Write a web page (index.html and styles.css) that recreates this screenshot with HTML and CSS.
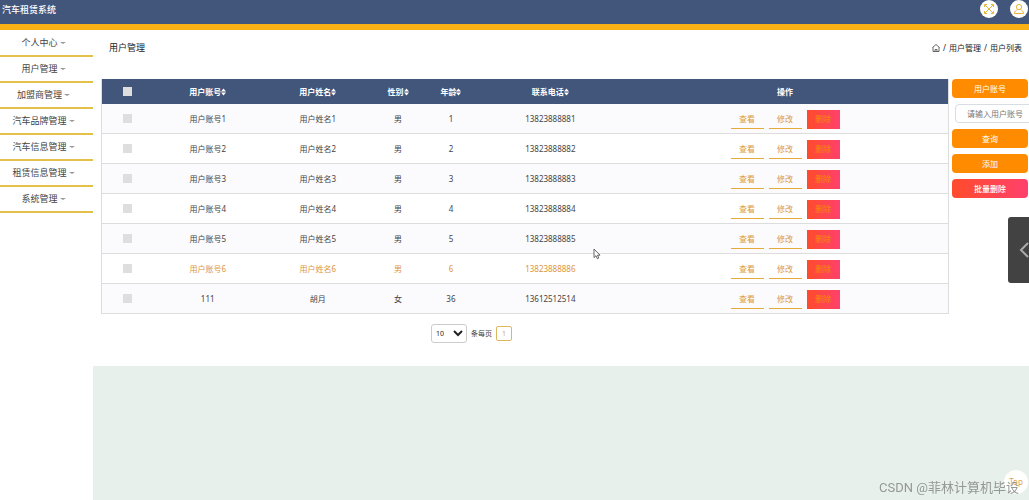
FILE: index.html
```
<!DOCTYPE html>
<html lang="zh-CN">
<head>
<meta charset="utf-8">
<title>汽车租赁系统</title>
<link rel="stylesheet" href="styles.css">
</head>
<body>
<svg class="defs" width="0" height="0" aria-hidden="true">
  <symbol id="sort" viewBox="0 0 5 8"><path d="M0 3.5 2.5 0.5 5 3.5zM0 4.5 2.5 7.5 5 4.5z" fill="#fff"/></symbol>
</svg>
<header class="topbar">
  <h1 class="brand">汽车租赁系统</h1>
  <div class="tools">
    <button class="round" type="button" aria-label="全屏"><svg width="12" height="12" viewBox="0 0 12 12" fill="none" stroke="#e9b53c" stroke-width="1"><path d="M2 2l8 8M10 2l-8 8M1.500 4V1.500H4M8 1.500h2.500V4M10.500 8v2.500H8M4 10.500H1.500V8"/></svg></button>
    <button class="round" type="button" aria-label="用户"><svg width="12" height="12" viewBox="0 0 12 12" fill="none" stroke="#e9b53c" stroke-width="1"><circle cx="6" cy="4" r="2.600"/><path d="M4.500 6.500C3 7.500 1.500 8 1.500 10.500h9C10.500 8 9 7.500 7.500 6.500"/></svg></button>
  </div>
</header>
<div class="layout">
  <nav class="sidebar">
    <a class="item" href="#">个人中心</a>
    <a class="item" href="#">用户管理</a>
    <a class="item" href="#">加盟商管理</a>
    <a class="item" href="#">汽车品牌管理</a>
    <a class="item" href="#">汽车信息管理</a>
    <a class="item" href="#">租赁信息管理</a>
    <a class="item" href="#">系统管理</a>
  </nav>
  <main class="main">
    <section class="panel">
      <div class="heading">
        <h2 class="title">用户管理</h2>
        <div class="crumbs"><svg width="8" height="8" viewBox="0 0 8 8" fill="none" stroke="#444" stroke-width="0.800"><path d="M0.500 3.500 4 0.500l3.500 3M1 3.200v4.300h6V3.200M3 7.500v-2h2v2"/></svg><span>/</span><span>用户管理</span><span>/</span><span>用户列表</span></div>
      </div>
      <div class="content">
        <div class="list">
          <table class="table">
            <colgroup><col class="c-check"><col class="c-account"><col class="c-name"><col class="c-sex"><col class="c-age"><col class="c-phone"><col class="c-ops"></colgroup>
            <thead><tr>
              <th><input class="check" type="checkbox" aria-label="全选"></th>
              <th>用户账号<svg class="sort"><use href="#sort"/></svg></th>
              <th>用户姓名<svg class="sort"><use href="#sort"/></svg></th>
              <th>性别<svg class="sort"><use href="#sort"/></svg></th>
              <th>年龄<svg class="sort"><use href="#sort"/></svg></th>
              <th>联系电话<svg class="sort"><use href="#sort"/></svg></th>
              <th>操作</th>
            </tr></thead>
            <tbody>
              <tr><td><input class="check" type="checkbox" aria-label="选择"></td><td>用户账号1</td><td>用户姓名1</td><td>男</td><td>1</td><td>13823888881</td><td><div class="ops"><button class="op">查看</button><button class="op">修改</button><button class="op del">删除</button></div></td></tr>
              <tr><td><input class="check" type="checkbox" aria-label="选择"></td><td>用户账号2</td><td>用户姓名2</td><td>男</td><td>2</td><td>13823888882</td><td><div class="ops"><button class="op">查看</button><button class="op">修改</button><button class="op del">删除</button></div></td></tr>
              <tr><td><input class="check" type="checkbox" aria-label="选择"></td><td>用户账号3</td><td>用户姓名3</td><td>男</td><td>3</td><td>13823888883</td><td><div class="ops"><button class="op">查看</button><button class="op">修改</button><button class="op del">删除</button></div></td></tr>
              <tr><td><input class="check" type="checkbox" aria-label="选择"></td><td>用户账号4</td><td>用户姓名4</td><td>男</td><td>4</td><td>13823888884</td><td><div class="ops"><button class="op">查看</button><button class="op">修改</button><button class="op del">删除</button></div></td></tr>
              <tr><td><input class="check" type="checkbox" aria-label="选择"></td><td>用户账号5</td><td>用户姓名5</td><td>男</td><td>5</td><td>13823888885</td><td><div class="ops"><button class="op">查看</button><button class="op">修改</button><button class="op del">删除</button></div></td></tr>
              <tr class="active"><td><input class="check" type="checkbox" aria-label="选择"></td><td>用户账号6</td><td>用户姓名6</td><td>男</td><td>6</td><td>13823888886</td><td><div class="ops"><button class="op">查看</button><button class="op">修改</button><button class="op del">删除</button></div></td></tr>
              <tr><td><input class="check" type="checkbox" aria-label="选择"></td><td>111</td><td>胡月</td><td>女</td><td>36</td><td>13612512514</td><td><div class="ops"><button class="op">查看</button><button class="op">修改</button><button class="op del">删除</button></div></td></tr>
            </tbody>
          </table>
          <div class="pager">
            <select class="size" id="size"><option>10</option></select>
            <label for="size">条每页</label>
            <button class="page" type="button">1</button>
          </div>
        </div>
        <form class="filters">
          <label class="btn" for="account">用户账号</label>
          <input class="field" id="account" type="text" placeholder="请输入用户账号">
          <button class="btn" type="button">查询</button>
          <button class="btn" type="button">添加</button>
          <button class="btn danger" type="button">批量删除</button>
        </form>
      </div>
    </section>
  </main>
</div>
<button class="drawer" type="button" aria-label="展开"><svg width="10" height="16" viewBox="0 0 10 16" fill="none" stroke="#aaa" stroke-width="2"><path d="M9 1 2 8l7 7"/></svg></button>
<button class="top" type="button">Top</button>
<div class="mark">CSDN @菲林计算机毕设</div>
<svg class="cursor" width="8" height="12" viewBox="0 0 8 12"><path d="M1 1v8.500l2-1.800 1.300 3 1.500-.7L4.500 7.200H7z" fill="#fff" stroke="#555" stroke-width="0.900"/></svg>
</body>
</html>
```
FILE: styles.css
```
* { box-sizing: border-box; }
body {
  margin: 0;
  min-height: 100vh;
  display: flex;
  flex-direction: column;
  overflow: hidden;
  background: #fff;
  color: #444;
  font: 8px/12px "Noto Sans", "Noto Sans CJK SC", sans-serif;
}
button, input, select { font: inherit; color: inherit; margin: 0; padding: 0; }
button { border: 0; background: none; cursor: pointer; }
.defs { position: absolute; }

.topbar {
  height: 30px;
  display: flex;
  align-items: flex-start;
  justify-content: space-between;
  padding: 0 1px 0 2px;
  background: #42557b;
  border-bottom: 6px solid #f9b115;
}
.brand { margin: 0; font-size: 9px; line-height: 20px; font-weight: 500; color: #fff; }
.tools { display: flex; gap: 12px; }
.round {
  width: 18px;
  height: 18px;
  display: grid;
  place-items: center;
  border-radius: 50%;
  background: #fff;
}

.layout { flex: 1; display: flex; }
.sidebar { width: 93px; flex: none; padding-top: 1px; }
.item {
  height: 26px;
  display: flex;
  align-items: center;
  justify-content: center;
  gap: 2px;
  padding-right: 6px;
  border-bottom: 2px solid #e3c04a;
  color: #444;
  font-size: 9px;
  text-decoration: none;
}
.item::after {
  content: "";
  border: 3px solid transparent;
  border-top: 2px solid #999;
  border-bottom: 0;
}
.main { flex: 1; min-width: 0; background: #e8f0ec; }
.panel { padding-bottom: 23px; background: #fff; }
.heading {
  height: 49px;
  display: flex;
  align-items: flex-start;
  justify-content: space-between;
  padding: 12px 7px 0 16px;
}
.title { margin: 0; font-size: 9px; line-height: 12px; font-weight: 400; color: #222; }
.crumbs { display: flex; align-items: center; gap: 3px; color: #222; }

.content { display: flex; gap: 3px; padding-left: 8px; }
.list { flex: 1; min-width: 0; }
.table {
  width: 100%;
  table-layout: fixed;
  border-collapse: separate;
  border-spacing: 0;
  border: 1px solid #ddd;
  border-top: 0;
  border-bottom: 0;
  text-align: center;
}
.c-check { width: 6%; }
.c-account { width: 13%; }
.c-name { width: 13%; }
.c-sex { width: 6%; }
.c-age { width: 6.5%; }
.c-phone { width: 17%; }
.c-ops { width: 38.5%; }
.table th { height: 25px; padding: 0; background: #42557b; color: #fff; font-weight: 700; }
.table td { height: 30px; padding: 0; border-bottom: 1px solid #ddd; }
.table tbody tr:nth-child(odd) { background: #fbfafd; }
.table .active { color: #e0963a; }
.sort { width: 5px; height: 8px; vertical-align: middle; }
.check {
  appearance: none;
  display: block;
  width: 9px;
  height: 9px;
  margin: 0 auto;
  background: #dedede;
}
.ops { display: flex; justify-content: center; gap: 5px; padding-top: 1px; }
.op { width: 33px; height: 19px; border-bottom: 1px solid #e5a93c; color: #dc9a3c; }
.op.del { border: 0; background: linear-gradient(90deg, #ff4b2b, #ff416c); color: #f58a00; }

.pager {
  display: flex;
  align-items: center;
  justify-content: center;
  gap: 4px;
  padding: 10px 107px 0 0;
  font-size: 7px;
}
.size {
  width: 36px;
  height: 19px;
  border: 1px solid #ccc;
  border-radius: 3px;
  background: #fff;
  color: #222;
}
.page { width: 16px; height: 15px; border: 1px solid #ddb663; border-radius: 2px; color: #cf9f70; }

.filters {
  width: 77px;
  display: flex;
  flex-direction: column;
  gap: 6px;
  padding-right: 1px;
}
.btn {
  height: 19px;
  border-radius: 4px;
  background: #ff8c00;
  color: #fff;
  line-height: 19px;
  text-align: center;
}
.danger { background: linear-gradient(90deg, #ff4b2b, #ff416c); font-weight: 500; }
.field {
  width: 80px;
  height: 19px;
  margin-left: 3px;
  padding: 0 11px;
  border: 1px solid #d8dde4;
  border-radius: 4px;
  background: #fff;
}
.field::placeholder { color: #777; }

.drawer {
  position: fixed;
  right: 0;
  top: 217px;
  width: 21px;
  height: 66px;
  padding-left: 11px;
  border-radius: 3px 0 0 3px;
  background: #424242;
}
.drawer svg { display: block; }
.top {
  position: fixed;
  right: 1px;
  bottom: 6px;
  width: 24px;
  height: 24px;
  border-radius: 50%;
  background: #fff;
  color: #e0a14a;
}
.mark {
  position: fixed;
  right: 10px;
  bottom: 3px;
  color: #949896;
  font: 13px/18px Roboto, "Noto Sans CJK SC", sans-serif;
}
.cursor { position: fixed; left: 593px; top: 248px; }
```
